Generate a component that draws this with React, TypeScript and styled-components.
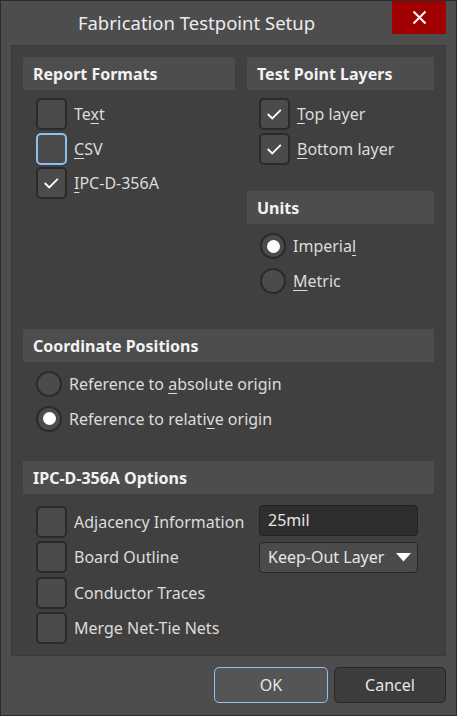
import React from 'react';
import styled, { createGlobalStyle } from 'styled-components';

const GlobalStyle = createGlobalStyle`
    html, body {
        margin: 0;
        padding: 0;
        background: #4d4d4d;
    }
    * {
        box-sizing: border-box;
    }
`

function CheckMark() {
    return (
        <svg width="30" height="30" viewBox="0 0 30 30">
            <path d="M7.5 15 L12.5 20 L22 10.5" fill="none" stroke="#ffffff" strokeWidth="2" />
        </svg>
    )
}

function Check({ checked, focused, label }: { checked?: boolean; focused?: boolean; label: React.ReactNode }) {
    return (
        <OptionRow>
            <CheckBox $focused={focused}>{checked && <CheckMark />}</CheckBox>
            <Label>{label}</Label>
        </OptionRow>
    )
}

function Radio({ selected, label }: { selected?: boolean; label: React.ReactNode }) {
    return (
        <OptionRow $gap={7}>
            <RadioCircle>{selected && <Dot />}</RadioCircle>
            <Label>{label}</Label>
        </OptionRow>
    )
}

function App() {
    return (
        <Window>
            <GlobalStyle />
            <TitleBar>
                <Title>Fabrication Testpoint Setup</Title>
                <CloseButton>
                    <svg width="15" height="15" viewBox="0 0 15 15">
                        <path d="M1.5 1.5 L13.5 13.5 M13.5 1.5 L1.5 13.5" stroke="#ffffff" strokeWidth="2" />
                    </svg>
                </CloseButton>
            </TitleBar>
            <Panel>
                <TopGrid>
                    <Column>
                        <SectionHeader>Report Formats</SectionHeader>
                        <Options>
                            <Check label={<>Te<u>x</u>t</>} />
                            <Check focused label={<><u>C</u>SV</>} />
                            <Check checked label={<><u>I</u>PC-D-356A</>} />
                        </Options>
                    </Column>
                    <Column>
                        <SectionHeader>Test Point Layers</SectionHeader>
                        <Options $indent={12}>
                            <Check checked label={<><u>T</u>op layer</>} />
                            <Check checked label={<><u>B</u>ottom layer</>} />
                        </Options>
                        <SectionHeader $top={25}>Units</SectionHeader>
                        <Options $indent={13} $top={5}>
                            <Radio selected label={<>Imperia<u>l</u></>} />
                            <Radio label={<><u>M</u>etric</>} />
                        </Options>
                    </Column>
                </TopGrid>
                <SectionHeader $top={31}>Coordinate Positions</SectionHeader>
                <Options $top={5}>
                    <Radio label={<>Reference to <u>a</u>bsolute origin</>} />
                    <Radio selected label={<>Reference to relati<u>v</u>e origin</>} />
                </Options>
                <SectionHeader $top={25}>IPC-D-356A Options</SectionHeader>
                <IpcGrid>
                    <Check label="Adjacency Information" />
                    <TextInput>25mil</TextInput>
                    <Check label="Board Outline" />
                    <Select>
                        Keep-Out Layer
                        <svg width="15" height="9" viewBox="0 0 15 9">
                            <path d="M0 0 L15 0 L7.5 8.5 Z" fill="#ffffff" />
                        </svg>
                    </Select>
                    <Check label="Conductor Traces" />
                    <span />
                    <Check label="Merge Net-Tie Nets" />
                    <span />
                </IpcGrid>
            </Panel>
            <Footer>
                <Button $primary>OK</Button>
                <Button>Cancel</Button>
            </Footer>
        </Window>
    )
}

export default App;

const Window = styled.div`
    width: 457px;
    height: 716px;
    border: 1px solid #2b2b2b;
    background-color: #4d4d4d;
    display: flex;
    flex-direction: column;
    font-family: "Noto Sans", "Open Sans", sans-serif;
    color: #dcdcdc;
`
const TitleBar = styled.div`
    height: 44px;
    display: flex;
    align-items: flex-start;
    padding-right: 10px;
`
const Title = styled.div`
    flex: 1;
    height: 42px;
    display: flex;
    align-items: center;
    justify-content: center;
    font-size: 18.5px;
    color: #ececec;
`
const CloseButton = styled.div`
    width: 54px;
    height: 33px;
    background-color: #a00000;
    display: flex;
    align-items: center;
    justify-content: center;
`
const Panel = styled.div`
    margin: 0 10px;
    height: 611px;
    background-color: #404040;
    border: 1px solid #393939;
    padding: 11px 11px 0 11px;
    display: flex;
    flex-direction: column;
`
const TopGrid = styled.div`
    display: grid;
    grid-template-columns: 212px 187px;
    column-gap: 12px;
`
const Column = styled.div`
    display: flex;
    flex-direction: column;
`
const SectionHeader = styled.div<{ $top?: number }>`
    height: 33px;
    flex: none;
    margin-top: ${p => p.$top || 0}px;
    background-color: #4d4d4d;
    display: flex;
    align-items: center;
    padding-left: 10px;
    font-size: 16px;
    font-weight: bold;
    color: #f2f2f2;
`
const Options = styled.div<{ $indent?: number; $top?: number }>`
    display: flex;
    flex-direction: column;
    padding-left: ${p => p.$indent ?? 13}px;
    margin-top: ${p => p.$top ?? 7}px;
`
const OptionRow = styled.div<{ $gap?: number }>`
    height: 34.5px;
    flex: none;
    display: flex;
    align-items: center;
    gap: ${p => p.$gap ?? 7}px;
`
const CheckBox = styled.div<{ $focused?: boolean }>`
    width: 31px;
    height: 32px;
    flex: none;
    border-radius: 5px;
    border: 2px solid ${p => p.$focused ? '#8cc0ef' : '#2a2a2a'};
    background-color: #4b4b4b;
    display: flex;
    align-items: center;
    justify-content: center;
`
const RadioCircle = styled.div`
    width: 26px;
    height: 26px;
    flex: none;
    border-radius: 50%;
    border: 2px solid #2a2a2a;
    background-color: #4b4b4b;
    display: flex;
    align-items: center;
    justify-content: center;
`
const Dot = styled.div`
    width: 13px;
    height: 13px;
    border-radius: 50%;
    background-color: #ffffff;
`
const Label = styled.span`
    font-size: 16px;
    color: #dcdcdc;
    white-space: nowrap;
    u {
        text-underline-offset: 3px;
    }
`
const IpcGrid = styled.div`
    display: grid;
    grid-template-columns: 223px 159px;
    grid-auto-rows: 35.5px;
    align-items: center;
    padding-left: 13px;
    margin-top: 10px;
`
const TextInput = styled.div`
    height: 31px;
    margin-top: -3px;
    border-radius: 4px;
    border: 1px solid #222222;
    background-color: #2e2e2e;
    display: flex;
    align-items: center;
    padding-left: 8px;
    font-size: 16px;
    color: #e6e6e6;
`
const Select = styled.div`
    height: 31px;
    border-radius: 4px;
    border: 1.5px solid #262626;
    background-color: #4b4b4b;
    display: flex;
    align-items: center;
    justify-content: space-between;
    padding: 0 6px 0 8px;
    font-size: 16px;
    color: #e6e6e6;
`
const Footer = styled.div`
    flex: 1;
    display: flex;
    justify-content: flex-end;
    align-items: flex-start;
    gap: 6px;
    padding: 11px 10px 0 0;
`
const Button = styled.div<{ $primary?: boolean }>`
    width: ${p => p.$primary ? 114 : 112}px;
    height: 36px;
    border-radius: 5px;
    border: 1.5px solid ${p => p.$primary ? '#8cc0ef' : '#262626'};
    background-color: ${p => p.$primary ? '#555555' : '#3c3c3c'};
    display: flex;
    align-items: center;
    justify-content: center;
    font-size: 16px;
    color: #e6e6e6;
`
